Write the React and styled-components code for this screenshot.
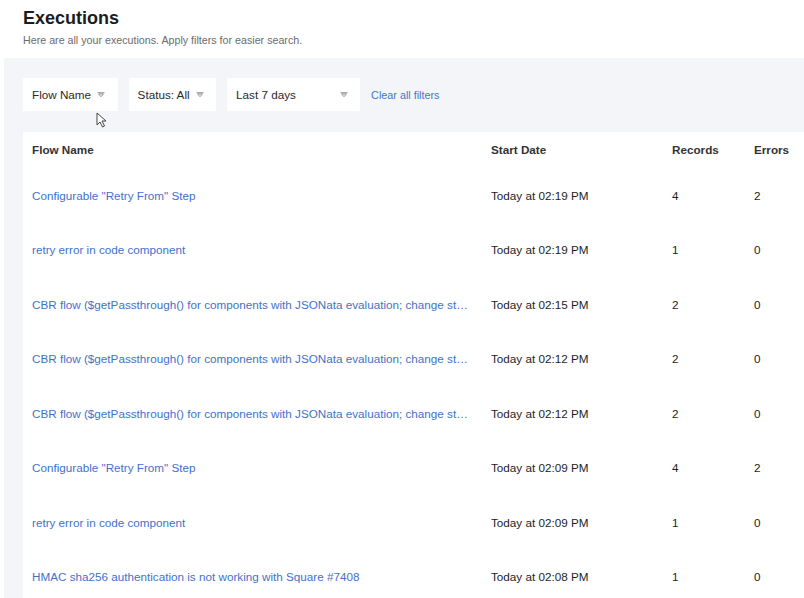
import React from 'react';
import styled, { createGlobalStyle } from 'styled-components';

const GlobalStyle = createGlobalStyle`
  html, body {
    margin: 0;
    padding: 0;
    background: #ffffff;
    overflow: hidden;
  }
  body {
    font-family: "Liberation Sans", Arial, sans-serif;
    color: #222;
  }
`;

const executions = [
  { name: 'Configurable "Retry From" Step', date: 'Today at 02:19 PM', records: 4, errors: 2 },
  { name: 'retry error in code component', date: 'Today at 02:19 PM', records: 1, errors: 0 },
  { name: 'CBR flow ($getPassthrough() for components with JSONata evaluation; change step to use new flow logic)', date: 'Today at 02:15 PM', records: 2, errors: 0 },
  { name: 'CBR flow ($getPassthrough() for components with JSONata evaluation; change step to use new flow logic)', date: 'Today at 02:12 PM', records: 2, errors: 0 },
  { name: 'CBR flow ($getPassthrough() for components with JSONata evaluation; change step to use new flow logic)', date: 'Today at 02:12 PM', records: 2, errors: 0 },
  { name: 'Configurable "Retry From" Step', date: 'Today at 02:09 PM', records: 4, errors: 2 },
  { name: 'retry error in code component', date: 'Today at 02:09 PM', records: 1, errors: 0 },
  { name: 'HMAC sha256 authentication is not working with Square #7408', date: 'Today at 02:08 PM', records: 1, errors: 0 },
];

function Caret() {
  return (
    <svg width="8" height="6" viewBox="0 0 8 6">
      <path d="M0.5 0.7 H7.5" stroke="#777" strokeWidth="0.8" />
      <path d="M1.6 1.9 L4 4.7 L6.4 1.9 Z" fill="none" stroke="#777" strokeWidth="0.8" strokeLinejoin="round" />
    </svg>
  );
}

function Pointer() {
  return (
    <svg width="12" height="16" viewBox="0 0 12 16">
      <path d="M1 1 L1 13 L4 10 L6.5 15 L8.5 14 L6 9 L10 9 Z" fill="#fff" stroke="#444" strokeWidth="1" strokeLinejoin="round" />
    </svg>
  );
}

export default function App() {
  return (
    <Page>
      <GlobalStyle />
      <Header>
        <Title>Executions</Title>
        <Subtitle>Here are all your executions. Apply filters for easier search.</Subtitle>
      </Header>
      <Content>
        <Filters>
          <Filter>
            Flow Name <Caret />
          </Filter>
          <Filter>
            Status: All <Caret />
          </Filter>
          <Filter wide>
            Last 7 days <Caret />
          </Filter>
          <ClearLink>Clear all filters</ClearLink>
          <CursorMark>
            <Pointer />
          </CursorMark>
        </Filters>
        <Card>
          <Table>
            <colgroup>
              <col style={{ width: 459 }} />
              <col style={{ width: 181 }} />
              <col style={{ width: 82 }} />
              <col />
            </colgroup>
            <thead>
              <tr>
                <Th>Flow Name</Th>
                <Th>Start Date</Th>
                <Th>Records</Th>
                <Th>Errors</Th>
              </tr>
            </thead>
            <tbody>
              {executions.map((row, i) => (
                <Row key={i}>
                  <NameCell>
                    <FlowLink>{row.name}</FlowLink>
                  </NameCell>
                  <Td>{row.date}</Td>
                  <Td>{row.records}</Td>
                  <Td>{row.errors}</Td>
                </Row>
              ))}
            </tbody>
          </Table>
        </Card>
      </Content>
    </Page>
  );
}

const Page = styled.div`
  width: 804px;
  height: 598px;
  overflow: hidden;
  background: #fff;
`;

const Header = styled.div`
  height: 58px;
  padding: 7px 0 0 23px;
  box-sizing: border-box;
`;

const Title = styled.h1`
  margin: 0;
  font-size: 18px;
  line-height: 22px;
  font-weight: 700;
  color: #1c1c1c;
`;

const Subtitle = styled.p`
  margin: 0;
  font-size: 10.7px;
  line-height: 22px;
  color: #6b6b6b;
`;

const Content = styled.div`
  margin-left: 4px;
  background: #f4f5f8;
  padding: 20px 0 0 19px;
  height: 540px;
  box-sizing: border-box;
`;

const Filters = styled.div`
  position: relative;
  display: flex;
  align-items: center;
  gap: 11px;
  height: 33px;
`;

const Filter = styled.div`
  display: flex;
  align-items: center;
  justify-content: space-between;
  gap: 6px;
  height: 33px;
  box-sizing: border-box;
  padding: 0 12.5px 0 9px;
  width: ${p => (p.wide ? '133px' : 'auto')};
  background: #fff;
  font-size: 11.7px;
  color: #2a2a2a;
  svg {
    flex: none;
    margin-top: 1px;
  }
`;

const ClearLink = styled.a`
  font-size: 10.8px;
  color: #4476cc;
  cursor: pointer;
`;

const CursorMark = styled.div`
  position: absolute;
  left: 73px;
  top: 34px;
  line-height: 0;
`;

const Card = styled.div`
  margin-top: 21px;
  width: 840px;
  background: #fff;
`;

const Table = styled.table`
  width: 100%;
  table-layout: fixed;
  border-collapse: collapse;
  font-size: 11.7px;
`;

const Th = styled.th`
  height: 36px;
  padding: 0 9px 2px;
  box-sizing: border-box;
  text-align: left;
  font-weight: 700;
  color: #333;
  vertical-align: middle;
`;

const Row = styled.tr`
  height: 54.5px;
`;

const Td = styled.td`
  padding: 0 9px;
  color: #1e1e1e;
  vertical-align: middle;
  white-space: nowrap;
`;

const NameCell = styled(Td)`
  padding-right: 12px;
`;

const FlowLink = styled.a`
  display: block;
  overflow: hidden;
  text-overflow: ellipsis;
  white-space: nowrap;
  color: #3f72c8;
  cursor: pointer;
`;
